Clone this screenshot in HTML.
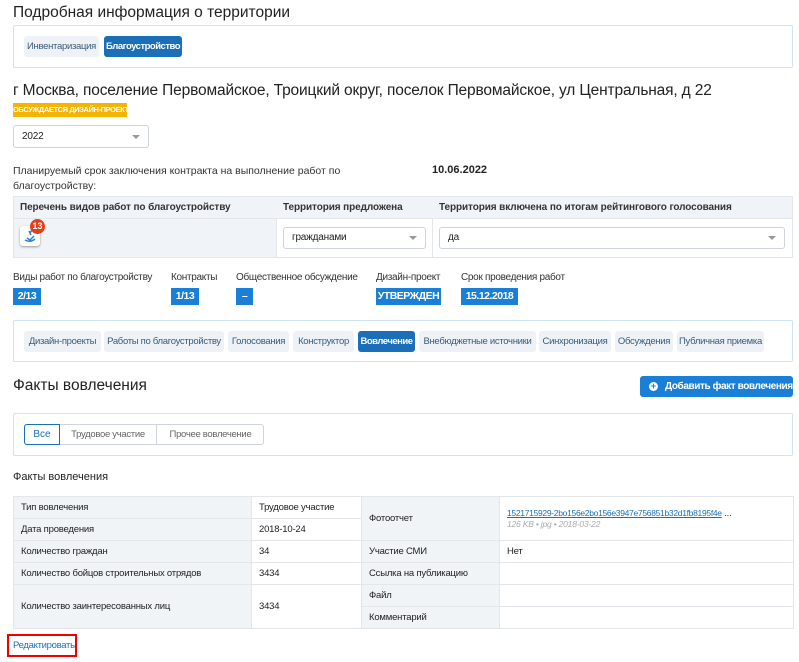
<!DOCTYPE html>
<html><head><meta charset="utf-8"><style>
*{box-sizing:border-box;margin:0;padding:0}
body{width:799px;height:662px;background:#fff;font-family:"Liberation Sans",sans-serif;color:#222;position:relative;overflow:hidden}
.a{position:absolute;white-space:nowrap}
.box{position:absolute;border:1px solid #cfe3f5;border-radius:2px;background:#fff}
.tab{position:absolute;height:21px;line-height:21px;font-size:9.5px;letter-spacing:-0.3px;white-space:nowrap;text-align:center;background:#eef2f6;color:#3a5a7a;border-radius:3px}
.tab.on{background:#1a6fb8;color:#fff;font-weight:bold;letter-spacing:-0.5px}
.bdg{position:absolute;height:17px;line-height:17px;font-size:10.5px;letter-spacing:-0.5px;white-space:nowrap;font-weight:bold;color:#fff;background:#1a7fd6;text-align:center}
.sel{position:absolute;border:1px solid #cfd4da;border-radius:3px;background:#fff;font-size:10px;letter-spacing:-0.2px;padding-left:8px}
.sel:after{content:"";position:absolute;right:8px;top:50%;margin-top:-2px;border:4px solid transparent;border-top:4px solid #999;border-bottom:0}
.lbl{font-size:11px;color:#333}
.sm{font-size:10px;letter-spacing:-0.3px;color:#333}
.th{font-size:10px;font-weight:bold;letter-spacing:-0.1px;color:#333}
table{position:absolute;border-collapse:collapse;font-size:9.5px;letter-spacing:-0.2px}
td{border:1px solid #e3e7ec;padding:0 7px;height:22px;white-space:nowrap}
.g{background:#f1f4f7}
</style></head><body>
<div class="a" style="left:13px;top:4px;font-size:15.5px">Подробная информация о территории</div>
<div class="box" style="left:13px;top:25px;width:780px;height:43px"></div>
<div class="tab" style="left:24px;top:36px;width:75px">Инвентаризация</div>
<div class="tab on" style="left:104px;top:36px;width:78px">Благоустройство</div>
<div class="a" style="left:13px;top:82px;font-size:15.5px;letter-spacing:-0.15px">г Москва, поселение Первомайское, Троицкий округ, поселок Первомайское, ул Центральная, д 22</div>
<div class="a" style="left:13px;top:103px;width:114px;height:14px;background:#f5b400;color:#fff;font-size:7.5px;letter-spacing:-0.4px;font-weight:bold;line-height:14px;text-align:center;overflow:hidden">ОБСУЖДАЕТСЯ ДИЗАЙН-ПРОЕКТ</div>
<div class="sel" style="left:13px;top:125px;width:136px;height:23px;line-height:21px">2022</div>
<div class="a lbl" style="left:13px;top:164px;line-height:15px;font-size:10.5px">Планируемый срок заключения контракта на выполнение работ по<br>благоустройству:</div>
<div class="a" style="left:432px;top:164px;font-size:11px;font-weight:bold">10.06.2022</div>
<div class="a" style="left:13px;top:196px;width:780px;height:23px;background:#f0f3f7;border:1px solid #e3e7ec"></div>
<div class="a" style="left:13px;top:218px;width:264px;height:40px;background:#f0f3f7;border:1px solid #e3e7ec"></div>
<div class="a" style="left:276px;top:218px;width:517px;height:40px;border:1px solid #e3e7ec"></div>
<div class="a" style="left:432px;top:218px;width:1px;height:40px;background:#e3e7ec"></div>
<div class="a th" style="left:20px;top:202px">Перечень видов работ по благоустройству</div>
<div class="a th" style="left:283px;top:202px">Территория предложена</div>
<div class="a th" style="left:439px;top:202px">Территория включена по итогам рейтингового голосования</div>
<div class="a" style="left:20px;top:226px;width:20px;height:20px;background:#fff;border-radius:3px;box-shadow:0 1px 2px #999"><svg width="20" height="20"><path d="M5 14q5 3 10-1M7 12l3 2 4-4M9 5l2 4M12 4l-2 3" stroke="#2a7fd0" stroke-width="1.5" fill="none"/></svg></div>
<div class="a" style="left:30px;top:219px;width:15px;height:15px;border-radius:50%;background:#e0401a;color:#fff;font-size:9px;font-weight:bold;text-align:center;line-height:15px">13</div>
<div class="sel" style="left:283px;top:227px;width:143px;height:22px;line-height:20px">гражданами</div>
<div class="sel" style="left:439px;top:227px;width:346px;height:22px;line-height:20px">да</div>
<div class="a sm" style="left:13px;top:272px">Виды работ по благоустройству</div>
<div class="a sm" style="left:171px;top:272px">Контракты</div>
<div class="a sm" style="left:236px;top:272px">Общественное обсуждение</div>
<div class="a sm" style="left:376px;top:272px">Дизайн-проект</div>
<div class="a sm" style="left:461px;top:272px">Срок проведения работ</div>
<div class="bdg" style="left:13px;top:288px;width:28px">2/13</div>
<div class="bdg" style="left:171px;top:288px;width:28px">1/13</div>
<div class="bdg" style="left:236px;top:288px;width:17px">–</div>
<div class="bdg" style="left:376px;top:288px;width:65px">УТВЕРЖДЕН</div>
<div class="bdg" style="left:461px;top:288px;width:57px">15.12.2018</div>
<div class="box" style="left:13px;top:320px;width:780px;height:42px"></div>
<div class="tab" style="left:24px;top:331px;width:77px">Дизайн-проекты</div>
<div class="tab" style="left:104px;top:331px;width:120px">Работы по благоустройству</div>
<div class="tab" style="left:228px;top:331px;width:61px">Голосования</div>
<div class="tab" style="left:293px;top:331px;width:61px">Конструктор</div>
<div class="tab on" style="left:358px;top:331px;width:57px">Вовлечение</div>
<div class="tab" style="left:419px;top:331px;width:117px">Внебюджетные источники</div>
<div class="tab" style="left:539px;top:331px;width:72px">Синхронизация</div>
<div class="tab" style="left:615px;top:331px;width:58px">Обсуждения</div>
<div class="tab" style="left:677px;top:331px;width:87px">Публичная приемка</div>
<div class="a" style="left:13px;top:377px;font-size:15.5px">Факты вовлечения</div>
<div class="a" style="left:640px;top:376px;width:153px;height:21px;background:#1a7fd6;border-radius:3px;color:#fff;font-size:10px;letter-spacing:-0.4px;font-weight:bold;line-height:21px;padding-left:25px">Добавить факт вовлечения</div>
<div class="a" style="left:649px;top:382px;width:9px;height:9px;border-radius:50%;background:#fff;color:#1a7fd6;font-size:9px;line-height:9px;text-align:center;font-weight:bold">+</div>
<div class="box" style="left:13px;top:413px;width:780px;height:43px"></div>
<div class="a" style="left:24px;top:424px;width:240px;height:21px;border:1px solid #cfd4da;border-radius:3px"></div>
<div class="a" style="left:24px;top:424px;width:36px;height:21px;border:1px solid #1a6fb8;border-radius:3px 0 0 3px;font-size:10px;color:#1a6fb8;text-align:center;line-height:19px">Все</div>
<div class="a" style="left:60px;top:424px;width:97px;height:21px;border-right:1px solid #cfd4da;font-size:9.5px;letter-spacing:-0.3px;color:#666;text-align:center;line-height:21px">Трудовое участие</div>
<div class="a" style="left:157px;top:424px;width:107px;height:21px;font-size:9.5px;letter-spacing:-0.3px;color:#666;text-align:center;line-height:21px">Прочее вовлечение</div>
<div class="a" style="left:13px;top:471px;font-size:11px">Факты вовлечения</div>
<table style="left:13px;top:496px;width:781px">
<tr><td class="g" style="width:238px">Тип вовлечения</td><td style="width:110px">Трудовое участие</td><td class="g" rowspan="2" style="width:138px">Фотоотчет</td><td rowspan="2"><span style="color:#1a6fb8;text-decoration:underline;font-size:8.5px;letter-spacing:-0.3px">1521715929-2bo156e2bo156e3947e756851b32d1fb8195f4e</span> ...<br><i style="color:#aaa;font-size:8.5px">126 KB • jpg • 2018-03-22</i></td></tr>
<tr><td class="g">Дата проведения</td><td>2018-10-24</td></tr>
<tr><td class="g">Количество граждан</td><td>34</td><td class="g">Участие СМИ</td><td>Нет</td></tr>
<tr><td class="g">Количество бойцов строительных отрядов</td><td>3434</td><td class="g">Ссылка на публикацию</td><td></td></tr>
<tr><td class="g" rowspan="2">Количество заинтересованных лиц</td><td rowspan="2">3434</td><td class="g">Файл</td><td></td></tr>
<tr><td class="g">Комментарий</td><td></td></tr>
</table>
<div class="a" style="left:7px;top:634px;width:70px;height:23px;border:2px solid #e00;font-size:9.5px;letter-spacing:-0.3px;color:#1a6fb8;line-height:19px;padding-left:4px">Редактировать</div>
</body></html>
